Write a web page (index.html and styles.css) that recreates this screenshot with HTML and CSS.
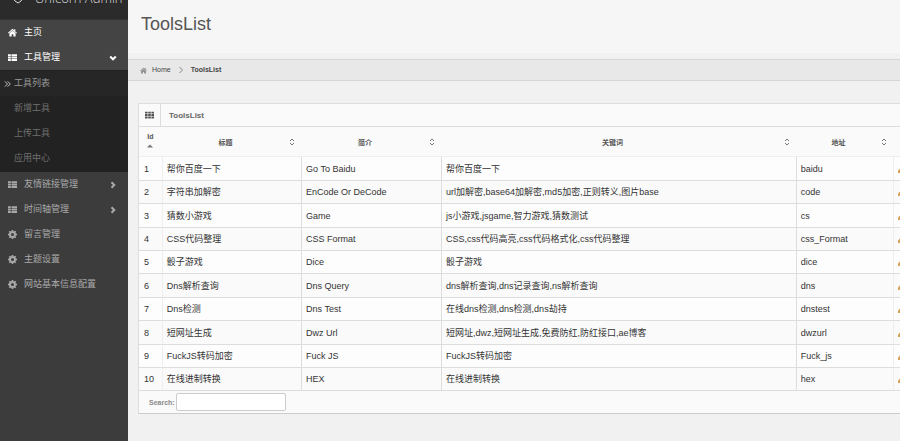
FILE: index.html
```html
<!DOCTYPE html>
<html lang="zh-CN">
<head>
    <meta charset="UTF-8">
    <meta name="viewport" content="width=device-width, initial-scale=1.0">
    <title>ToolsList - Unicorn Admin</title>
    <link rel="stylesheet" href="styles.css">
</head>
<body>
    <svg class="sprite" aria-hidden="true">
        <symbol id="icon-home" viewBox="0 0 16 16">
            <path d="M8 1.500L0 8.500l1 1.200L8 4l7 5.700 1-1.200-3-2.500V2h-2v2.100z M8 5L2.500 9.500V15h4v-4h3v4h4V9.500z"/>
        </symbol>
        <symbol id="icon-list" viewBox="0 0 16 14">
            <path d="M0 1h5v3.400H0zM6.200 1H16v3.400H6.200zM0 5.400h5v3.400H0zM6.200 5.400H16v3.400H6.200zM0 9.800h5v3.400H0zM6.200 9.800H16v3.400H6.200z"/>
        </symbol>
        <symbol id="icon-grid" viewBox="0 0 16 14">
            <path d="M0 1h4.600v3.400H0zM5.700 1h4.600v3.400H5.700zM11.400 1H16v3.400h-4.600zM0 5.400h4.600v3.400H0zM5.700 5.400h4.600v3.400H5.700zM11.400 5.400H16v3.400h-4.600zM0 9.800h4.600v3.400H0zM5.700 9.800h4.600v3.400H5.700zM11.400 9.800H16v3.400h-4.600z"/>
        </symbol>
        <symbol id="icon-cog" viewBox="0 0 16 16">
            <path fill-rule="evenodd" d="M6.700 0h2.600l.4 2.200 1.200.5 1.800-1.300 1.900 1.900-1.300 1.800.5 1.200 2.200.4v2.600l-2.200.4-.5 1.200 1.300 1.800-1.900 1.900-1.800-1.300-1.200.5-.4 2.200H6.700l-.4-2.200-1.200-.5-1.800 1.300-1.900-1.900 1.300-1.800-.5-1.200L0 9.300V6.700l2.200-.4.500-1.200-1.300-1.800 1.900-1.900 1.800 1.300 1.200-.5zM8 5.300a2.700 2.700 0 1 0 0 5.400 2.700 2.700 0 0 0 0-5.400z"/>
        </symbol>
        <symbol id="icon-right" viewBox="0 0 8 8">
            <path class="stroke" d="M2.500 1.200L5.300 4 2.500 6.800"/>
        </symbol>
        <symbol id="icon-down" viewBox="0 0 8 8">
            <path class="stroke" d="M1.200 2.500L4 5.300 6.800 2.500"/>
        </symbol>
        <symbol id="icon-sep" viewBox="0 0 8 8">
            <path class="thin" d="M2.500 1L5.500 4 2.500 7"/>
        </symbol>
        <symbol id="icon-double" viewBox="0 0 8 8">
            <path class="thin" d="M1 1l3 3-3 3M4.200 1l3 3-3 3"/>
        </symbol>
        <symbol id="icon-sort" viewBox="0 0 6 8">
            <path class="thin" d="M1 3l2-2 2 2M1 5l2 2 2-2"/>
        </symbol>
        <symbol id="icon-up" viewBox="0 0 6 8">
            <path d="M0 5.500L3 2.500l3 3z"/>
        </symbol>
        <symbol id="icon-edit" viewBox="0 0 8 8">
            <path d="M0 8V5.500L5.500 0 8 2.500 2.500 8z"/>
        </symbol>
    </svg>

    <aside class="sidebar">
        <div class="brand">
            <svg viewBox="0 0 12 14"><path class="stroke" d="M1 2v6l2 3 3 2 3-2 2-3V2L6 1z"/></svg>
            <span>Unicorn Admin</span>
        </div>
        <nav>
            <ul class="menu">
                <li class="active"><a href="#"><svg class="icon"><use href="#icon-home"/></svg>主页</a></li>
                <li class="active">
                    <a href="#"><svg class="icon"><use href="#icon-list"/></svg>工具管理<svg class="arrow"><use href="#icon-down"/></svg></a>
                    <ul class="submenu">
                        <li class="current"><a href="#"><svg class="arrow"><use href="#icon-double"/></svg>工具列表</a></li>
                        <li><a href="#">新增工具</a></li>
                        <li><a href="#">上传工具</a></li>
                        <li><a href="#">应用中心</a></li>
                    </ul>
                </li>
                <li><a href="#"><svg class="icon"><use href="#icon-list"/></svg>友情链接管理<svg class="arrow"><use href="#icon-right"/></svg></a></li>
                <li><a href="#"><svg class="icon"><use href="#icon-list"/></svg>时间轴管理<svg class="arrow"><use href="#icon-right"/></svg></a></li>
                <li><a href="#"><svg class="icon"><use href="#icon-cog"/></svg>留言管理</a></li>
                <li><a href="#"><svg class="icon"><use href="#icon-cog"/></svg>主题设置</a></li>
                <li><a href="#"><svg class="icon"><use href="#icon-cog"/></svg>网站基本信息配置</a></li>
            </ul>
        </nav>
    </aside>

    <main class="content">
        <header class="page-header">
            <h1>ToolsList</h1>
        </header>
        <nav class="breadcrumb">
            <a href="#"><svg class="home"><use href="#icon-home"/></svg>Home</a>
            <svg class="sep"><use href="#icon-sep"/></svg>
            <a href="#" class="current">ToolsList</a>
        </nav>
        <section class="box">
            <div class="box-title">
                <span class="box-icon"><svg><use href="#icon-grid"/></svg></span>
                <h2>ToolsList</h2>
            </div>
            <table>
                <colgroup>
                    <col class="col-id">
                    <col class="col-title">
                    <col class="col-intro">
                    <col class="col-keywords">
                    <col class="col-address">
                    <col>
                </colgroup>
                <thead>
                    <tr>
                        <th class="sorted"><div>Id<svg><use href="#icon-up"/></svg></div></th>
                        <th><div><span>标题</span><svg><use href="#icon-sort"/></svg></div></th>
                        <th><div><span>简介</span><svg><use href="#icon-sort"/></svg></div></th>
                        <th><div><span>关键词</span><svg><use href="#icon-sort"/></svg></div></th>
                        <th><div><span>地址</span><svg><use href="#icon-sort"/></svg></div></th>
                        <th></th>
                    </tr>
                </thead>
                <tbody>
                    <tr><td>1</td><td>帮你百度一下</td><td>Go To Baidu</td><td>帮你百度一下</td><td>baidu</td><td class="edit"><svg><use href="#icon-edit"/></svg></td></tr>
                    <tr><td>2</td><td>字符串加解密</td><td>EnCode Or DeCode</td><td>url加解密,base64加解密,md5加密,正则转义,图片base</td><td>code</td><td class="edit"><svg><use href="#icon-edit"/></svg></td></tr>
                    <tr><td>3</td><td>猜数小游戏</td><td>Game</td><td>js小游戏,jsgame,智力游戏,猜数测试</td><td>cs</td><td class="edit"><svg><use href="#icon-edit"/></svg></td></tr>
                    <tr><td>4</td><td>CSS代码整理</td><td>CSS Format</td><td>CSS,css代码高亮,css代码格式化,css代码整理</td><td>css_Format</td><td class="edit"><svg><use href="#icon-edit"/></svg></td></tr>
                    <tr><td>5</td><td>骰子游戏</td><td>Dice</td><td>骰子游戏</td><td>dice</td><td class="edit"><svg><use href="#icon-edit"/></svg></td></tr>
                    <tr><td>6</td><td>Dns解析查询</td><td>Dns Query</td><td>dns解析查询,dns记录查询,ns解析查询</td><td>dns</td><td class="edit"><svg><use href="#icon-edit"/></svg></td></tr>
                    <tr><td>7</td><td>Dns检测</td><td>Dns Test</td><td>在线dns检测,dns检测,dns劫持</td><td>dnstest</td><td class="edit"><svg><use href="#icon-edit"/></svg></td></tr>
                    <tr><td>8</td><td>短网址生成</td><td>Dwz Url</td><td>短网址,dwz,短网址生成,免费防红,防红接口,ae博客</td><td>dwzurl</td><td class="edit"><svg><use href="#icon-edit"/></svg></td></tr>
                    <tr><td>9</td><td>FuckJS转码加密</td><td>Fuck JS</td><td>FuckJS转码加密</td><td>Fuck_js</td><td class="edit"><svg><use href="#icon-edit"/></svg></td></tr>
                    <tr><td>10</td><td>在线进制转换</td><td>HEX</td><td>在线进制转换</td><td>hex</td><td class="edit"><svg><use href="#icon-edit"/></svg></td></tr>
                </tbody>
            </table>
            <div class="box-footer">
                <label for="search">Search:</label>
                <input type="text" id="search">
            </div>
        </section>
    </main>
</body>
</html>
```
FILE: styles.css
```css
* {
    box-sizing: border-box;
}
body {
    display: flex;
    min-height: 100vh;
    margin: 0;
    overflow: hidden;
    font-family: "Liberation Sans", "Noto Sans CJK SC", sans-serif;
    font-size: 9px;
    color: #333;
    background-color: #f1f1f1;
}
a {
    color: inherit;
    text-decoration: none;
}
ul {
    margin: 0;
    padding: 0;
    list-style: none;
}
svg {
    fill: currentColor;
}
.sprite {
    position: absolute;
    width: 0;
    height: 0;
}
.stroke {
    fill: none;
    stroke: currentColor;
    stroke-width: 2;
}
.thin {
    fill: none;
    stroke: currentColor;
    stroke-width: 1;
}

/* sidebar */
.sidebar {
    flex: 0 0 128px;
    background-color: #3c3c3c;
    color: #a9a9a9;
}
.brand {
    display: flex;
    align-items: flex-end;
    gap: 11px;
    height: 20px;
    padding: 0 0 15px 12px;
    font-family: "Open Sans", sans-serif;
    font-size: 13px;
    font-weight: 300;
    line-height: 12px;
    white-space: nowrap;
    color: #ddd;
    background-color: #2b2b2b;
    border-bottom: 1px solid #333;
}
.brand svg {
    flex: none;
    width: 12px;
    height: 14px;
}
.brand .stroke {
    stroke-width: 1;
}
.menu a {
    display: flex;
    align-items: center;
    height: 25px;
    padding: 0 11px 0 8px;
    line-height: 25px;
}
.menu .active > a {
    color: #fff;
    background-color: #444;
}
.menu .icon {
    width: 9px;
    height: 9px;
    margin-right: 7px;
}
.menu .arrow {
    width: 8px;
    height: 8px;
    margin-left: auto;
}
.submenu {
    padding: 1px 0;
    background-color: #222;
    color: #707070;
}
.submenu a {
    padding: 0 10px 0 14px;
}
.submenu .current a {
    gap: 3px;
    padding-left: 4px;
    color: #999;
    background-color: #262626;
}
.submenu .current .arrow {
    width: 7px;
    margin-left: 0;
    color: #ddd;
}

/* content */
.content {
    flex: 1;
    min-width: 0;
}
.page-header {
    height: 53px;
    padding: 13px;
    background-color: #f6f6f6;
}
.page-header h1 {
    margin: 0;
    font-size: 18px;
    font-weight: normal;
    line-height: 22px;
    color: #555;
}
.breadcrumb {
    display: flex;
    align-items: center;
    gap: 6px;
    height: 22px;
    margin-top: 6px;
    padding: 0 12px;
    font-size: 7px;
    line-height: 20px;
    color: #444;
    background-color: #e8e8e8;
    border-top: 1px solid #d6d6d6;
    border-bottom: 1px solid #d6d6d6;
}
.breadcrumb a {
    display: flex;
    align-items: center;
    gap: 5px;
}
.breadcrumb .current {
    font-weight: bold;
}
.breadcrumb svg {
    width: 7px;
    height: 7px;
    color: #888;
}
.breadcrumb .sep {
    width: 8px;
    height: 8px;
}

/* table box */
.box {
    margin: 22px 0 0 10px;
    overflow: hidden;
    background-color: #fafafa;
    border: 1px solid #ddd;
    border-right: none;
    border-bottom-color: #ccc;
}
.box-title {
    display: flex;
    height: 23px;
    border-bottom: 1px solid #ddd;
}
.box-icon {
    display: flex;
    align-items: center;
    justify-content: center;
    width: 22px;
    color: #555;
    border-right: 1px solid #ddd;
}
.box-icon svg {
    width: 9px;
    height: 8px;
}
.box-title h2 {
    margin: 0;
    padding-left: 8px;
    font-size: 8px;
    line-height: 23px;
    color: #666;
}
table {
    width: 100%;
    table-layout: fixed;
    border-collapse: separate;
    border-spacing: 0;
}
.col-id {
    width: 3%;
}
.col-title {
    width: 18.300%;
}
.col-intro {
    width: 18.400%;
}
.col-keywords {
    width: 46.600%;
}
.col-address {
    width: 12.800%;
}
th {
    height: 30px;
    padding: 0;
    font-size: 7px;
    color: #555;
    border-bottom: 1px solid #eee;
}
th div {
    display: flex;
    align-items: center;
    padding-right: 6px;
}
th span {
    flex: 1;
}
th svg {
    width: 6px;
    height: 8px;
    color: #777;
}
.sorted div {
    flex-direction: column;
    gap: 2px;
    padding: 0;
}
td {
    height: 23px;
    padding: 0 5px 0 4px;
    line-height: 20px;
    white-space: nowrap;
    border-bottom: 1px solid #ddd;
    border-left: 1px solid #ddd;
}
td:first-child {
    padding-left: 5px;
    border-left: none;
}
td:nth-child(2),
td:last-child {
    border-left-color: #eee;
}
tbody tr:nth-child(odd) {
    background-color: #fdfdfd;
}
tbody tr:nth-child(5n+1) td,
tbody tr:nth-child(5n+3) td {
    height: 24px;
}
.edit {
    overflow: hidden;
    color: #d9a05a;
}
.edit svg {
    display: block;
    width: 8px;
    height: 8px;
}
.box-footer {
    display: flex;
    align-items: center;
    gap: 1px;
    height: 22px;
    padding-left: 10px;
}
.box-footer label {
    font-size: 7px;
    font-weight: bold;
    color: #888;
}
.box-footer input {
    width: 110px;
    height: 18px;
    padding: 2px 4px;
    font-size: 9px;
    background-color: #fff;
    border: 1px solid #ccc;
    border-radius: 2px;
}
```
